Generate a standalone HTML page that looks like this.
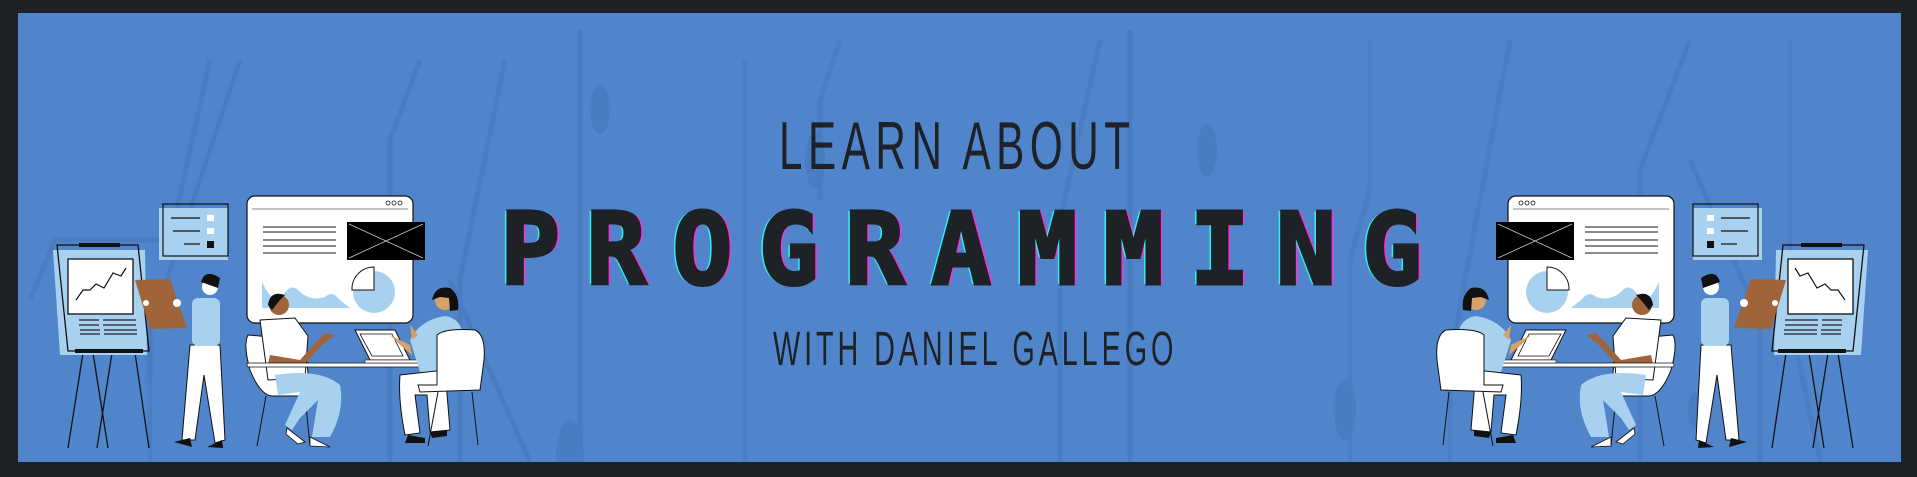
<!DOCTYPE html>
<html><head><meta charset="utf-8"><style>
html,body{margin:0;padding:0;}
body{width:1917px;height:477px;background:#1e2226;position:relative;overflow:hidden;font-family:"Liberation Sans",sans-serif;}
#bg{position:absolute;left:18px;top:13px;width:1883px;height:449px;background:#5185cb;overflow:hidden;}
.t{position:absolute;color:#1e2226;white-space:nowrap;transform-origin:0 0;}
#t1{left:779px;top:107px;font-size:68px;letter-spacing:9px;transform:scaleX(0.62);}
#t3{left:773px;top:322px;font-size:48px;letter-spacing:6.5px;transform:scaleX(0.6);}
#t2{left:500px;top:200px;font-family:"DejaVu Sans Mono","Liberation Mono",monospace;font-weight:bold;font-size:100px;letter-spacing:26px;color:#1e2226;-webkit-text-stroke:3px #1e2226;text-shadow:-3px 0 #2ff0f0,3px 0 #ff2fd8;line-height:1;}
svg{position:absolute;left:0;top:0;}
</style></head><body>
<div id="bg"></div>
<svg width="1917" height="477" viewBox="0 0 1917 477">
<defs><clipPath id="cp"><rect x="18" y="13" width="1883" height="449"/></clipPath></defs>
<g clip-path="url(#cp)">
<g stroke="#4a7cc2" stroke-width="5" fill="none" opacity="0.9">
<path d="M30 300 L55 240 L170 240 L210 60"/>
<path d="M150 462 L150 330 L240 60"/>
<path d="M390 462 L390 140 L420 60"/>
<path d="M450 280 L530 462"/>
<path d="M460 462 L460 280 L505 60"/>
<path d="M580 462 L580 30"/>
<path d="M745 60 L745 462"/>
<path d="M820 200 L820 100 L840 40"/>
<path d="M1060 462 L1060 220 L1100 40"/>
<path d="M1130 462 L1130 30"/>
<path d="M1350 462 L1350 260 L1370 190 L1370 40"/>
<path d="M1450 462 L1450 360 L1510 40"/>
<path d="M1640 462 L1640 170 L1690 40"/>
<path d="M1760 462 L1760 320 L1690 160"/>
<path d="M1790 40 L1790 320 L1850 600"/>
</g>
<g fill="#4a7cc2"><ellipse cx="600" cy="110" rx="10" ry="24"/><ellipse cx="570" cy="460" rx="14" ry="40"/><ellipse cx="815" cy="160" rx="10" ry="28"/><ellipse cx="1207" cy="150" rx="10" ry="26"/><ellipse cx="1345" cy="410" rx="11" ry="30"/><ellipse cx="1695" cy="410" rx="7" ry="18"/></g>
</g>
<g id="grp">
<g stroke="#111" stroke-width="1.3">
<line x1="83" y1="353" x2="68" y2="448"/><line x1="93" y1="353" x2="108" y2="448"/><line x1="112" y1="353" x2="97" y2="448"/><line x1="135" y1="353" x2="149" y2="448"/>
</g>
<polygon points="53,250 145,250 147,355 60,355" fill="#a8d1ef"/>
<polygon points="57,245 138,245 149,351 68,351" fill="none" stroke="#111" stroke-width="1.3"/>
<rect x="79" y="243" width="41" height="4" fill="#111"/>
<rect x="68" y="259" width="65" height="55" fill="#fff" stroke="#111" stroke-width="1.3"/>
<polyline points="76,300 83,290 90,290 96,284 104,288 113,273 121,276 126,268" fill="none" stroke="#111" stroke-width="1.2"/>
<g stroke="#223" stroke-width="1.3"><line x1="79" y1="320" x2="99" y2="320"/><line x1="103" y1="320" x2="136" y2="320"/><line x1="79" y1="325" x2="99" y2="325"/><line x1="103" y1="325" x2="136" y2="325"/><line x1="80" y1="330" x2="100" y2="330"/><line x1="104" y1="330" x2="137" y2="330"/><line x1="80" y1="334" x2="100" y2="334"/><line x1="104" y1="334" x2="137" y2="334"/></g>
<rect x="75" y="349" width="68" height="4" fill="#111"/>
<rect x="159" y="208" width="69" height="52" fill="#a8d1ef"/>
<rect x="163" y="204" width="65" height="52" fill="none" stroke="#111" stroke-width="1.2"/>
<g stroke="#111" stroke-width="1.2"><line x1="171" y1="218" x2="200" y2="218"/><line x1="173" y1="231" x2="200" y2="231"/><line x1="184" y1="244" x2="200" y2="244"/></g>
<rect x="207" y="215" width="7" height="6" fill="#fff"/><rect x="207" y="228" width="7" height="6" fill="#fff"/><rect x="207" y="241" width="7" height="7" fill="#111"/>
<polygon points="182,440 190,345 220,345 225,440 215,443 204,375 195,440" fill="#fff" stroke="#111" stroke-width="1"/>
<path d="M174 442 L190 438 L192 447 Z M207 447 L222 440 L223 448 Z" fill="#111"/>
<rect x="192" y="298" width="28" height="48" rx="6" fill="#a8d1ef"/>
<polygon points="135,280 170,279 187,328 150,329" fill="#a0643a"/>
<circle cx="210" cy="287" r="8" fill="#fff"/><path d="M201 282 Q205 268 220 278 L218 288 Z" fill="#111"/>
<circle cx="177" cy="303" r="4" fill="#fff"/><circle cx="146" cy="303" r="3" fill="#fff"/>
<rect x="247" y="196" width="166" height="127" rx="8" fill="#fff" stroke="#111" stroke-width="1.2"/>
<line x1="252" y1="209" x2="408" y2="209" stroke="#888" stroke-width="1"/>
<g fill="none" stroke="#111" stroke-width="0.8"><circle cx="388" cy="203" r="2"/><circle cx="394" cy="203" r="2"/><circle cx="400" cy="203" r="2"/></g>
<g stroke="#444" stroke-width="1.2"><line x1="263" y1="227" x2="336" y2="227"/><line x1="263" y1="232" x2="336" y2="232"/><line x1="263" y1="240" x2="336" y2="240"/><line x1="263" y1="246" x2="336" y2="246"/><line x1="263" y1="253" x2="336" y2="253"/></g>
<rect x="347" y="222" width="78" height="38" fill="#000"/>
<path d="M349 224 L423 258 M423 224 L349 258" stroke="#ccc" stroke-width="0.8"/>
<path d="M262 282 Q270 300 280 300 Q290 282 298 290 Q310 302 325 297 Q332 290 340 300 L350 308 L262 308 Z" fill="#a8d1ef"/>
<circle cx="374" cy="292" r="21" fill="#a8d1ef"/>
<path d="M374 267 A22 22 0 0 0 352 290 L374 290 Z" fill="#fff" stroke="#111" stroke-width="1"/>
<path d="M248 335 Q243 345 250 370 Q260 395 272 396 L310 396 L305 340 Z" fill="#fff" stroke="#111" stroke-width="1"/>
<line x1="266" y1="396" x2="257" y2="446" stroke="#111" stroke-width="1"/><line x1="305" y1="396" x2="310" y2="446" stroke="#111" stroke-width="1"/>
<path d="M260 320 L295 318 L308 336 L305 378 L268 380 Z" fill="#fff" stroke="#111" stroke-width="1"/>
<path d="M275 375 Q320 368 340 385 Q345 410 330 437 L312 437 L318 400 L300 418 L292 430 L285 425 L300 392 L278 395 Z" fill="#a8d1ef"/>
<path d="M287 428 L305 442 L298 444 L286 434 Z M310 437 L330 447 L310 446 Z" fill="#fff" stroke="#111" stroke-width="0.8"/>
<circle cx="279" cy="305" r="10" fill="#a0643a"/><path d="M268 305 Q270 290 285 295 L280 300 L272 310 Z" fill="#111"/>
<path d="M270 355 L300 360 L318 340 L325 333 L335 335 L322 345 L303 366 L268 364 Z" fill="#a0643a"/>
<rect x="247" y="363" width="186" height="4" rx="2" fill="#fff" stroke="#111" stroke-width="0.8"/>
<path d="M355 330 L395 330 L410 360 L370 360 Z" fill="#fff" stroke="#111" stroke-width="1"/>
<path d="M360 334 L392 334 L403 356 L372 356 Z" fill="none" stroke="#111" stroke-width="0.8"/>
<rect x="365" y="360" width="62" height="3" fill="#fff" stroke="#111" stroke-width="0.6"/>
<path d="M410 340 Q420 320 445 316 Q458 318 462 330 L458 370 L420 372 Z" fill="#a8d1ef"/>
<path d="M390 335 L410 345 L412 355 L400 345 Z" fill="#d9a068"/><path d="M410 325 L418 335 L412 340 Z" fill="#d9a068"/>
<path d="M400 375 L445 370 L450 430 L430 432 L427 395 L415 395 L420 433 L405 435 Q398 400 400 375 Z" fill="#fff" stroke="#111" stroke-width="1"/>
<path d="M408 435 L425 438 L425 443 L405 443 Z M430 432 L447 430 L447 436 L432 438 Z" fill="#111"/>
<circle cx="445" cy="300" r="10" fill="#d9a068"/><path d="M432 300 Q435 285 450 288 Q460 295 458 310 L450 311 L449 298 L440 297 Z" fill="#111"/>
<path d="M437 335 Q445 328 475 330 Q486 335 484 360 L480 390 L420 392 L418 385 L437 385 Z" fill="#fff" stroke="#111" stroke-width="1"/>
<line x1="438" y1="392" x2="428" y2="446" stroke="#111" stroke-width="1"/><line x1="472" y1="392" x2="478" y2="445" stroke="#111" stroke-width="1"/>
</g>
<use href="#grp" transform="translate(1921,0) scale(-1,1)"/>
</svg>
<div class="t" id="t1">LEARN ABOUT</div>
<div class="t" id="t2">PROGRAMMING</div>
<div class="t" id="t3">WITH DANIEL GALLEGO</div>
</body></html>
